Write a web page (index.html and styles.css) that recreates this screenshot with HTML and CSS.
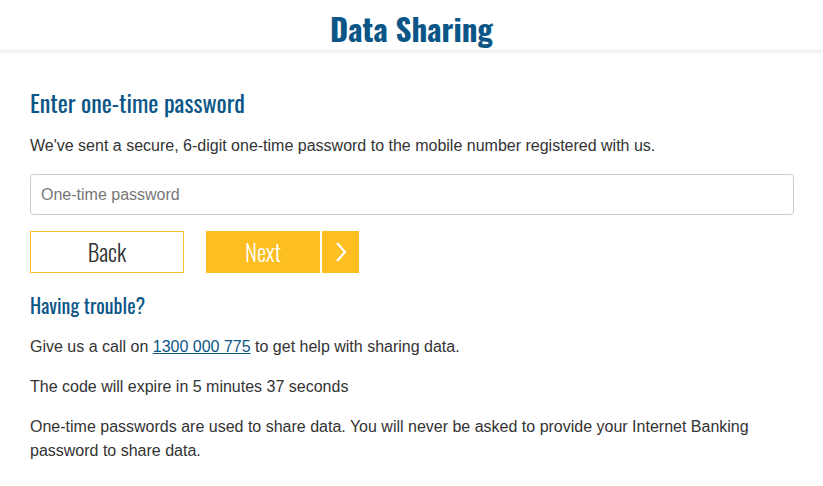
FILE: index.html
```html
<!DOCTYPE html>
<html lang="en">
<head>
  <meta charset="UTF-8" />
  <title>Data Sharing</title>
  <link rel="stylesheet" href="styles.css">
</head>
<body>
  <header class="top-bar">
    <h1>Data Sharing</h1>
  </header>

  <main class="content">
    <h2>Enter one-time password</h2>
    <p>We've sent a secure, 6-digit one-time password to the mobile number registered with us.</p>

    <input class="otp-input" type="text" placeholder="One-time password" />

    <div class="actions">
      <button class="btn-back">Back</button>
      <button class="btn-next">
        <span class="next-label">Next</span>
        <span class="next-arrow">
          <svg width="12" height="20" viewBox="0 0 12 20"><polyline points="2,1 10,10 2,19" fill="none" stroke="#fff" stroke-width="2.2" /></svg>
        </span>
      </button>
    </div>

    <h3>Having trouble?</h3>
    <p>Give us a call on <a href="#">1300 000 775</a> to get help with sharing data.</p>
    <p>The code will expire in 5 minutes 37 seconds</p>
    <p>One-time passwords are used to share data. You will never be asked to provide your Internet Banking password to share data.</p>
  </main>
</body>
</html>
```

FILE: styles.css
```css
body {
  margin: 0;
  font-family: Arial, "Liberation Sans", sans-serif;
  font-size: 16px;
  color: #333;
  background: #fff;
}
h1, h2, h3, .btn-back, .btn-next {
  font-family: "Oswald", "Liberation Sans Narrow", "DejaVu Sans Condensed", "Roboto", sans-serif;
  font-stretch: condensed;
}
.top-bar {
  height: 50px;
  border-bottom: 1px solid #eee;
  box-shadow: 0 2px 3px rgba(0,0,0,0.05);
  text-align: center;
}
.top-bar h1 {
  margin: 0;
  line-height: 56px;
  font-size: 31px;
  font-weight: bold;
  color: #0b5687;
}
.content {
  padding: 35px 29px 0 30px;
}
h2 {
  margin: 0 0 16px 0;
  font-size: 24px;
  font-weight: normal;
  color: #0b5687;
  line-height: 32px;
}
h3 {
  margin: 0 0 16px 0;
  font-size: 20px;
  font-weight: normal;
  color: #0b5687;
  line-height: 28px;
}
p {
  margin: 0 0 16px 0;
  line-height: 24px;
}
a {
  color: #0b5687;
}
.otp-input {
  display: block;
  box-sizing: border-box;
  width: 100%;
  height: 41px;
  margin-top: 4px;
  padding: 0 10px;
  border: 1px solid #ccc;
  border-radius: 4px;
  font-family: Arial, "Liberation Sans", sans-serif;
  font-size: 16px;
  color: #333;
}
.otp-input::placeholder {
  color: #777;
}
.actions {
  display: flex;
  gap: 22px;
  margin: 16px 0 18px 0;
}
.btn-back {
  width: 154px;
  height: 42px;
  background: #fff;
  border: 1px solid #fbbf24;
  color: #333;
  font-size: 23px;
  font-weight: 300;
  cursor: pointer;
  padding: 0;
}
.btn-next {
  display: flex;
  height: 42px;
  padding: 0;
  border: none;
  background: #fff;
  gap: 2px;
  cursor: pointer;
  font-size: 23px;
  font-weight: 300;
  color: #fff;
}
.next-label, .next-arrow {
  display: flex;
  align-items: center;
  justify-content: center;
  background: #fdbe21;
  height: 42px;
}
.next-label {
  width: 114px;
}
.next-arrow {
  width: 37px;
}
```
